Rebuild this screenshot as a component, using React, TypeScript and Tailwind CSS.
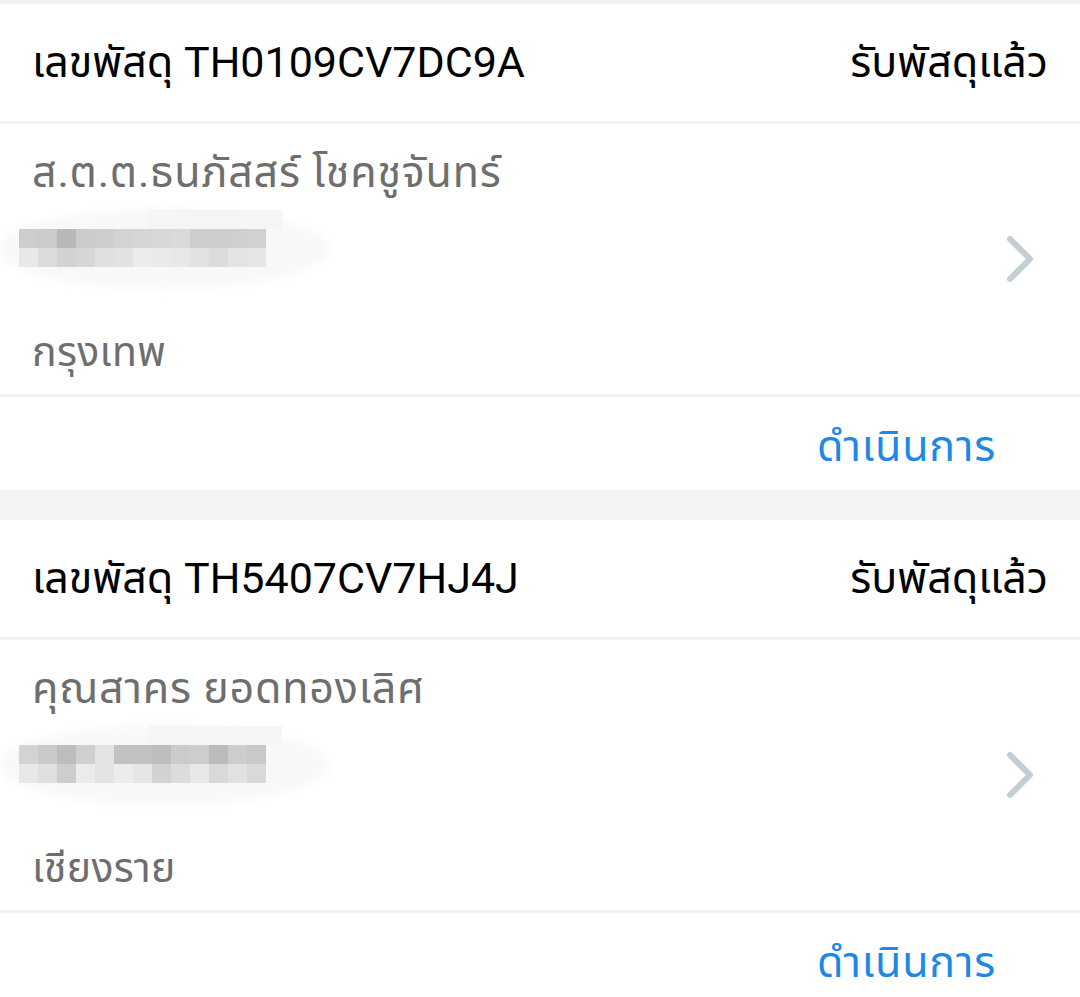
const parcels = [
  {
    id: 'TH0109CV7DC9A',
    status: 'รับพัสดุแล้ว',
    name: 'ส.ต.ต.ธนภัสสร์ โชคชูจันทร์',
    city: 'กรุงเทพ',
    blur: [
      ['#cdcdcd', '#cbcbcb', '#b8b8b8', '#cbcbcb', '#cecece', '#d3d3d3', '#d5d5d5', '#d8d8d8', '#dadada', '#cdcdcd', '#cdcdcd', '#cfcfcf', '#d1d1d1'],
      ['#e8e8e8', '#dcdcdc', '#d2d2d2', '#d6d6d6', '#e0e0e0', '#e2e2e2', '#ececec', '#eaeaea', '#e8e8e8', '#e2e2e2', '#dcdcdc', '#e4e4e4', '#e6e6e6'],
    ],
  },
  {
    id: 'TH5407CV7HJ4J',
    status: 'รับพัสดุแล้ว',
    name: 'คุณสาคร ยอดทองเลิศ',
    city: 'เชียงราย',
    blur: [
      ['#d3d3d3', '#cacaca', '#bdbdbd', '#cfcfcf', '#e3e3e3', '#c1c1c1', '#c1c1c1', '#bebebe', '#cbcbcb', '#cdcdcd', '#bbbbbb', '#cdcdcd', '#c9c9c9'],
      ['#e8e8e8', '#e0e0e0', '#cdcdcd', '#ebebeb', '#e3e3e3', '#ececec', '#e6e6e6', '#d2d2d2', '#dcdcdc', '#e8e8e8', '#d9d9d9', '#e2e2e2', '#d9d9d9'],
    ],
  },
]

function BlurredPhone({ rows }: { rows: string[][] }) {
  return (
    <div className="relative h-[38px] w-[300px]">
      {/* soft halo left around the pixelated area */}
      <div className="absolute -left-[20px] -top-[20px] h-[80px] w-[330px] rounded-[50%] bg-[#f8f8f8] blur-[6px]" />
      <div className="absolute left-[130px] -top-[19px] flex h-[19px]">
        {Array.from({ length: 7 }).map((_, i) => (
          <div key={i} className="h-[19px] w-[19px] bg-[#f5f5f5]" />
        ))}
      </div>
      <div className="relative flex flex-col">
        {rows.map((row, r) => (
          <div key={r} className="flex">
            {row.map((c, i) => (
              <div key={i} className="h-[19px] w-[19px]" style={{ backgroundColor: c }} />
            ))}
          </div>
        ))}
      </div>
    </div>
  )
}

function ParcelCard({ p }: { p: (typeof parcels)[number] }) {
  return (
    <div className="bg-white">
      <div className="flex h-[117px] items-center justify-between pl-[32px] pr-[32px] text-[43px] leading-none text-black">
        <span>เลขพัสดุ {p.id}</span>
        <span>{p.status}</span>
      </div>
      <div className="h-[3px] bg-[#f2f2f2]" />
      <div className="flex h-[270px] items-center pl-[32px] pr-[46px]">
        <div className="flex flex-1 flex-col self-stretch pt-[24px]">
          <div className="flex h-[48px] items-center text-[43px] leading-none tracking-[0.8px] text-[#6e6e6e]">{p.name}</div>
          <div className="-ml-[13px] mt-[33px]">
            <BlurredPhone rows={p.blur} />
          </div>
          <div className="mt-[61px] flex h-[48px] items-center text-[41px] leading-none tracking-[0.3px] text-[#6e6e6e]">{p.city}</div>
        </div>
        <svg width="28" height="48" viewBox="0 0 28 48" fill="none">
          <polyline points="4,4 24,24 4,44" stroke="#c2cdd4" strokeWidth="6" strokeLinecap="round" strokeLinejoin="round" />
        </svg>
      </div>
      <div className="h-[3px] bg-[#f2f2f2]" />
      <div className="flex h-[93px] items-center justify-end pr-[84px] pt-[6px] text-[43px] leading-none tracking-[0.8px] text-[#1e88e5]">
        ดำเนินการ
      </div>
    </div>
  )
}

export default function App() {
  return (
    <div
      className="min-h-screen bg-[#f3f3f3] pt-[4px]"
      style={{ fontFamily: 'Roboto, "Noto Sans", "Noto Sans Thai", "DejaVu Sans", sans-serif' }}
    >
      <div className="flex flex-col gap-[30px]">
        {parcels.map((p) => (
          <ParcelCard key={p.id} p={p} />
        ))}
      </div>
    </div>
  )
}
